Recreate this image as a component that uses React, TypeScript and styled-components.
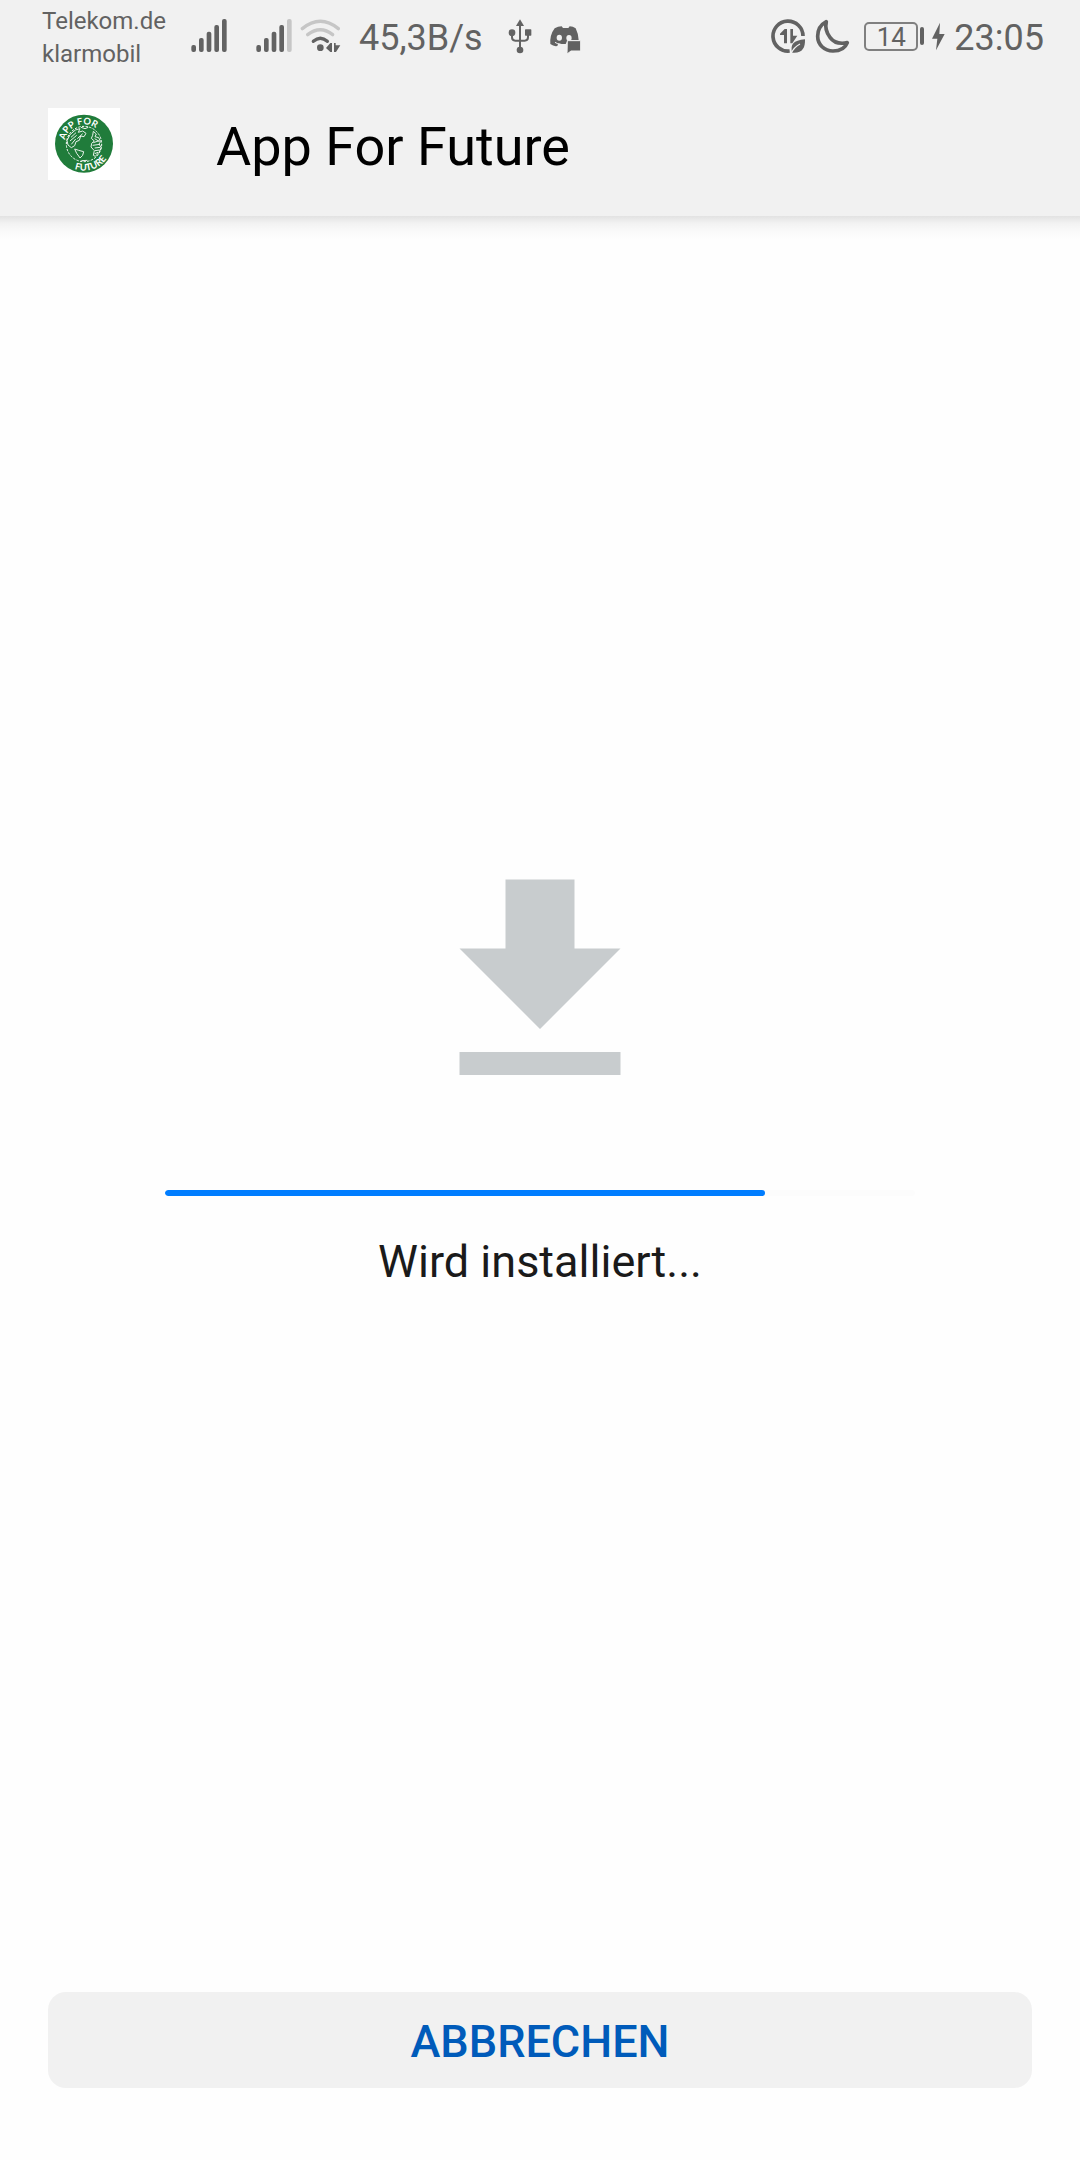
import React from "react";
import styled, { createGlobalStyle } from "styled-components";

const INK = "#626262";
const FAINT = "#c6c6c6";
const BAR = "#f1f1f1";

const GlobalStyle = createGlobalStyle`
  * { box-sizing: border-box; }
  body {
    margin: 0;
    background: #fefefe;
    font-family: Roboto, "Noto Sans", sans-serif;
  }
`;

const Screen = styled.div`
  display: flex;
  flex-direction: column;
  min-height: 100vh;
`;

const Top = styled.header`
  background: ${BAR};
`;

const StatusBar = styled.div`
  display: flex;
  align-items: center;
  justify-content: space-between;
  height: 72px;
  padding: 0 36px 0 42px;
  color: ${INK};
`;

const StatusGroup = styled.div`
  display: flex;
  align-items: center;
`;

const Carriers = styled.div`
  font-size: 24px;
  line-height: 33px;
  padding-top: 3px;
`;

const StatusText = styled.span<{ $before: number }>`
  margin-left: ${(p) => p.$before}px;
  font-size: 36px;
  line-height: 42px;
  padding-top: 3px;
  white-space: nowrap;
`;

const Glyph = styled.svg<{ $before?: number }>`
  flex: none;
  height: 36px;
  margin-left: ${(p) => p.$before ?? 0}px;
  fill: ${INK};
`;

const Battery = styled.span`
  display: flex;
  align-items: center;
  margin-left: 14px;
  &::after {
    content: "";
    width: 4px;
    height: 18px;
    margin-left: 2px;
    border-radius: 2px;
    background: ${INK};
  }
`;

const BatteryLevel = styled.span`
  width: 54px;
  height: 29px;
  border: 2px solid #808080;
  border-radius: 5px;
  font-size: 26px;
  line-height: 26px;
  text-align: center;
`;

const TitleBar = styled.div`
  display: flex;
  align-items: center;
  gap: 96px;
  height: 144px;
  padding: 0 48px;
`;

const Title = styled.h1`
  margin: 0;
  padding-top: 6px;
  font-size: 54px;
  line-height: 64px;
  font-weight: 400;
  color: #000;
`;

const Logo = styled.svg`
  flex: none;
  width: 72px;
  height: 72px;
  background: #fff;
`;

const LogoText = styled.text`
  font: 700 28px Lato, sans-serif;
  fill: #fff;
`;

const Shade = styled.div`
  height: 24px;
  background: linear-gradient(#e2e2e2, #f2f2f2 30%, #fafafa 65%, #fefefe);
`;

const Main = styled.main`
  flex: 1;
  display: flex;
  flex-direction: column;
  align-items: center;
  justify-content: center;
  padding: 0 165px 98px;
`;

const DownloadIcon = styled.svg`
  width: 276px;
  height: 276px;
  fill: #c8ccce;
`;

const Progress = styled.progress`
  appearance: none;
  display: block;
  width: 100%;
  height: 6px;
  margin: 69px 0 39px;
  border: 0;
  border-radius: 3px;
  overflow: hidden;
  background: #fcfcfc;
  &::-webkit-progress-bar { background: #fcfcfc; border-radius: 3px; }
  &::-webkit-progress-value { background: #007dff; border-radius: 3px; }
`;

const StatusLabel = styled.label`
  font-size: 45px;
  line-height: 54px;
  color: #1a1a1a;
`;

const Footer = styled.footer`
  display: flex;
  padding: 0 48px 72px;
`;

const CancelButton = styled.button`
  flex: 1;
  height: 96px;
  padding: 3px 0 0;
  border: 0;
  border-radius: 18px;
  background: ${BAR};
  color: #005bba;
  font: 500 45px Roboto, "Noto Sans", sans-serif;
  cursor: pointer;
`;

const SIGNAL_TOPS = [81, 60, 41, 21, 3];

function Signal({ level, before }: { level: number; before: number }) {
  return (
    <Glyph $before={before} width="36" viewBox="0 0 108 108" aria-hidden="true">
      {SIGNAL_TOPS.map((top, i) => (
        <rect
          key={top}
          x={1 + i * 23}
          y={top}
          width="14"
          height={102 - top}
          rx="6"
          fill={i < level ? INK : FAINT}
        />
      ))}
    </Glyph>
  );
}

function Wifi() {
  return (
    <Glyph $before={8} width="41" viewBox="0 0 123 108" aria-hidden="true">
      <g fill="none" strokeLinecap="round" strokeWidth="10">
        <path d="M7 32Q61-12 115 32" stroke={FAINT} />
        <path d="M23 50Q61 20 98 50" stroke={FAINT} />
        <path d="M40 70Q61 51 82 70" stroke={INK} />
      </g>
      <circle cx="61" cy="89" r="10" />
      <path d="M78 90L91 75H96V102H91ZM102 75H107V82H121L108 102H102Z" />
    </Glyph>
  );
}

function Usb() {
  return (
    <Glyph $before={25} width="24" viewBox="0 0 72 108" aria-hidden="true">
      <path d="M36 4L48 24H24Z" />
      <path
        d="M36 20V96M12 44V58Q12 68 22 68H50Q60 68 60 58V44"
        fill="none"
        stroke={INK}
        strokeWidth="6"
      />
      <circle cx="12" cy="44" r="10" />
      <rect x="51" y="34" width="19" height="19" rx="2" />
      <circle cx="36" cy="96" r="10" />
    </Glyph>
  );
}

function Discord() {
  return (
    <Glyph $before={17} width="32" viewBox="0 0 96 108" aria-hidden="true">
      <path d="M17 31Q27 25 38 25L42 30H58L62 25Q72 25 80 31Q88 47 89 66H56L50 78H34L28 76L25 84Q14 86 4 78Q2 51 17 31Z" />
      <path d="M18 73Q26 79 37 79" fill="none" stroke={BAR} strokeWidth="3" />
      <ellipse cx="31" cy="59" rx="8" ry="9" fill={BAR} />
      <ellipse cx="60" cy="60" rx="8" ry="9" fill={BAR} />
      <path
        d="M55 68H95V99H66L54 108Z"
        stroke={BAR}
        strokeWidth="3"
      />
    </Glyph>
  );
}

function DataSaver() {
  return (
    <Glyph width="35" viewBox="0 0 105 108" aria-hidden="true">
      <path
        d="M56 99A45 45 0 1 1 96 54"
        fill="none"
        stroke={INK}
        strokeWidth="11"
      />
      <path d="M48 33V76H39V51H27V47L41 33ZM58 33H66V53H79L64 76H58Z" />
      <path d="M102 64C103 91 93 107 63 104C58 80 66 67 102 64Z" />
      <path d="M60 107Q68 88 87 78" fill="none" stroke={BAR} strokeWidth="4" />
    </Glyph>
  );
}

function Moon() {
  return (
    <Glyph $before={9} width="35" viewBox="0 0 105 108" aria-hidden="true">
      <path
        d="M34 11C17 20 8 36 8 55C8 80 28 99 54 99C76 99 91 90 97 74C73 79 55 72 45 58C34 44 30 28 34 11Z"
        fill="none"
        stroke={INK}
        strokeWidth="11"
        strokeLinejoin="round"
      />
    </Glyph>
  );
}

function Bolt() {
  return (
    <Glyph $before={8} width="13" viewBox="0 0 39 108" aria-hidden="true">
      <path d="M24 14L0 62H16L12 97L38 48H22Z" />
    </Glyph>
  );
}

function AppLogo() {
  return (
    <Logo viewBox="0 0 216 216" role="img" aria-label="App For Future">
      <defs>
        <path id="arc-top" d="M50 107A58 58 0 0 1 166 107" />
        <path id="arc-bottom" d="M27 107A81 81 0 0 0 189 107" />
      </defs>
      <circle cx="108" cy="107" r="87" fill="#207c3b" />
      <g fill="none" stroke="#fff">
        <circle
          cx="108"
          cy="108"
          r="53"
          strokeWidth="3"
          strokeDasharray="7 4"
        />
        <g strokeWidth="3" opacity="0.9">
          <path d="M66 80L82 66L96 62L91 73L104 69L114 76L108 86L98 84L94 97L84 101L80 113L70 119L60 111L57 98Z" />
          <path d="M69 88L84 74M66 99L86 82M70 109L83 93M88 92L104 77" />
          <path d="M80 123L92 127L107 131L104 142L96 150L92 144L86 136Z" />
          <path d="M136 70L145 78L141 86L152 89L158 101L153 108L160 119L153 133L142 145L136 142L139 128L129 117L131 106L139 99L130 91L134 82Z" />
          <path d="M140 92L155 101M136 104L154 98M134 112L156 109M140 120L157 118M141 128L155 126M140 137L150 133" />
          <path d="M99 58L111 62L121 58M100 158L118 157" />
        </g>
      </g>
      <LogoText>
        <textPath href="#arc-top" startOffset="11">APP</textPath>
      </LogoText>
      <LogoText>
        <textPath href="#arc-top" startOffset="72">FOR</textPath>
      </LogoText>
      <LogoText>
        <textPath href="#arc-bottom" startOffset="98">FUTURE</textPath>
      </LogoText>
    </Logo>
  );
}

export default function App() {
  return (
    <Screen>
      <GlobalStyle />
      <Top>
        <StatusBar>
          <StatusGroup>
            <Carriers>
              <div>Telekom.de</div>
              <div>klarmobil</div>
            </Carriers>
            <Signal level={5} before={25} />
            <Signal level={4} before={29} />
            <Wifi />
            <StatusText $before={18}>45,3B/s</StatusText>
            <Usb />
            <Discord />
          </StatusGroup>
          <StatusGroup>
            <DataSaver />
            <Moon />
            <Battery>
              <BatteryLevel>14</BatteryLevel>
            </Battery>
            <Bolt />
            <StatusText $before={9}>23:05</StatusText>
          </StatusGroup>
        </StatusBar>
        <TitleBar>
          <AppLogo />
          <Title>App For Future</Title>
        </TitleBar>
      </Top>
      <Shade />
      <Main>
        <DownloadIcon viewBox="0 0 24 24" aria-hidden="true">
          <path d="M19 9h-4V3H9v6H5l7 7 7-7zM5 18v2h14v-2H5z" />
        </DownloadIcon>
        <Progress id="install-progress" value={80} max={100} />
        <StatusLabel htmlFor="install-progress">Wird installiert...</StatusLabel>
      </Main>
      <Footer>
        <CancelButton type="button">ABBRECHEN</CancelButton>
      </Footer>
    </Screen>
  );
}
